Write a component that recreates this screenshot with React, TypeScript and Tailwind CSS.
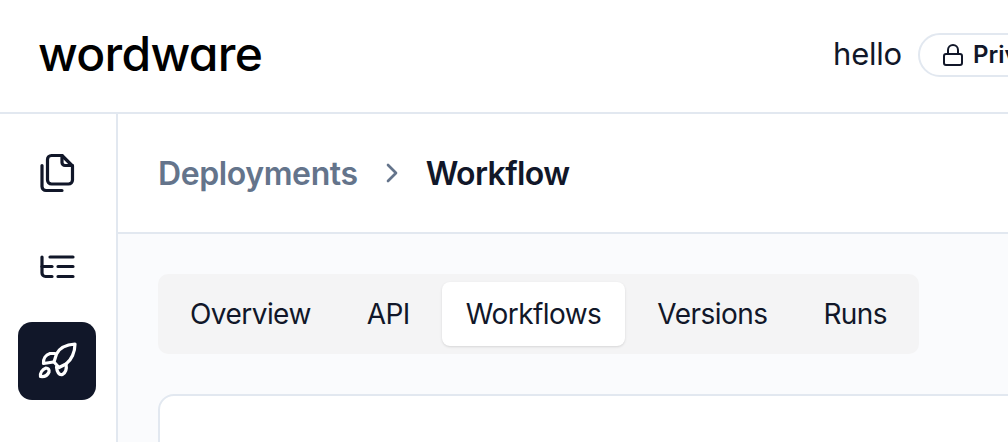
import { ChevronRight, Lock } from 'lucide-react';

const tabs = ['Overview', 'API', 'Workflows', 'Versions', 'Runs'];

function FilesIcon() {
  return (
    <svg width="36" height="40" viewBox="0 0 36 40" fill="none" stroke="#111729" strokeWidth="3.200" strokeLinecap="round" strokeLinejoin="round">
      <path d="M12.500 2.500h10.500l10.500 10.500v14a4 4 0 0 1-4 4h-17a4 4 0 0 1-4-4v-20.500a4 4 0 0 1 4-4z" />
      <path d="M23 2.500v7a3 3 0 0 0 3 3h7.500" />
      <path d="M3 12.500v21a4 4 0 0 0 4 4h16" />
    </svg>
  );
}

function TextListIcon() {
  return (
    <svg width="38" height="28" viewBox="0 0 38 28" fill="none" stroke="#111729" strokeWidth="3.200" strokeLinecap="round" strokeLinejoin="round">
      <path d="M4 4v16a3.500 3.500 0 0 0 3.500 3.500h6.500" />
      <path d="M4 13.500h10" />
      <path d="M12 4h23M20 13.500h15M20 23.500h15" />
    </svg>
  );
}

function RocketIcon() {
  return (
    <svg width="44" height="44" viewBox="35 339 44 44" fill="none" stroke="#ffffff" strokeWidth="3.200" strokeLinecap="round" strokeLinejoin="round">
      <path d="M75 344C67 344.500 60 347 56.500 354L54 362L59 367.500L66 364C71.500 360 75 352 75 344Z" />
      <path d="M55 353.500L50 353.500C45.500 355 43 359 43.500 363.500L53.500 362" />
      <path d="M66 364C67 369 65.500 372.500 62.500 374.500C59 375.500 57 372 56.500 367" />
      <path d="M46 368C42 369.500 40 373 40.500 376.500C44.500 377 47.500 375.500 49 372C49.500 369.500 48 368 46 368Z" />
    </svg>
  );
}

export default function App() {
  return (
    <div className="w-[1008px] h-[442px] overflow-hidden bg-white text-[#111729] font-['Inter',sans-serif]">
      <header className="h-[114px] flex items-center justify-between pl-[38px] pb-[2px] border-b-2 border-[#e2e8f0]">
        <span className="text-[48px] leading-none font-[550] tracking-[-0.7px] text-black -translate-y-[1px] [font-feature-settings:'cv11']">wordware</span>
        <div className="w-[175px] shrink-0 flex items-center gap-[16px]">
          <span className="w-[69px] text-[31px] font-normal leading-none tracking-[-0.2px] -translate-y-[2px]">hello</span>
          <div className="shrink-0 h-[44px] flex items-center gap-[8px] pl-[21px] pr-[22px] border-2 border-[#e2e8f0] rounded-full">
            <Lock size={24} strokeWidth={2} />
            <span className="text-[24px] font-semibold">Private</span>
          </div>
        </div>
      </header>
      <div className="flex h-[328px]">
        <aside className="w-[118px] shrink-0 border-r-2 border-[#e2e8f0] pl-[18px] pt-[20px] flex flex-col gap-[16px]">
          <div className="w-[78px] h-[78px] flex items-center justify-center rounded-[14px]">
            <FilesIcon />
          </div>
          <div className="w-[78px] h-[78px] flex items-center justify-center rounded-[14px]">
            <TextListIcon />
          </div>
          <div className="w-[78px] h-[78px] flex items-center justify-center rounded-[14px] bg-[#111729]">
            <RocketIcon />
          </div>
        </aside>
        <main className="flex-1 min-w-0">
          <div className="h-[120px] flex items-center pl-[40px] border-b-2 border-[#e2e8f0]">
            <span className="text-[32px] font-semibold tracking-[-0.4px] text-[#64748b] translate-y-[1px]">Deployments</span>
            <ChevronRight size={32} strokeWidth={2} className="mx-[18px] text-[#64748b]" />
            <span className="text-[32px] font-semibold tracking-[-0.6px] translate-y-[1px]">Workflow</span>
          </div>
          <div className="h-[208px] bg-[#fafbfd] pl-[40px] pt-[40px]">
            <div className="w-[761px] flex gap-[8px] p-[8px] rounded-[10px] bg-[#f4f4f5]">
              {tabs.map((tab) => (
                <div
                  key={tab}
                  className={
                    tab === 'Workflows'
                      ? 'h-[64px] px-[24px] flex items-center rounded-[8px] bg-white shadow-sm text-[28px] tracking-[-0.55px]'
                      : 'h-[64px] px-[24px] flex items-center text-[28px] tracking-[-0.55px]'
                  }
                >
                  {tab}
                </div>
              ))}
            </div>
            <div className="mt-[40px] w-[1000px] h-[100px] bg-white border-2 border-[#e2e8f0] rounded-[16px]" />
          </div>
        </main>
      </div>
    </div>
  );
}
